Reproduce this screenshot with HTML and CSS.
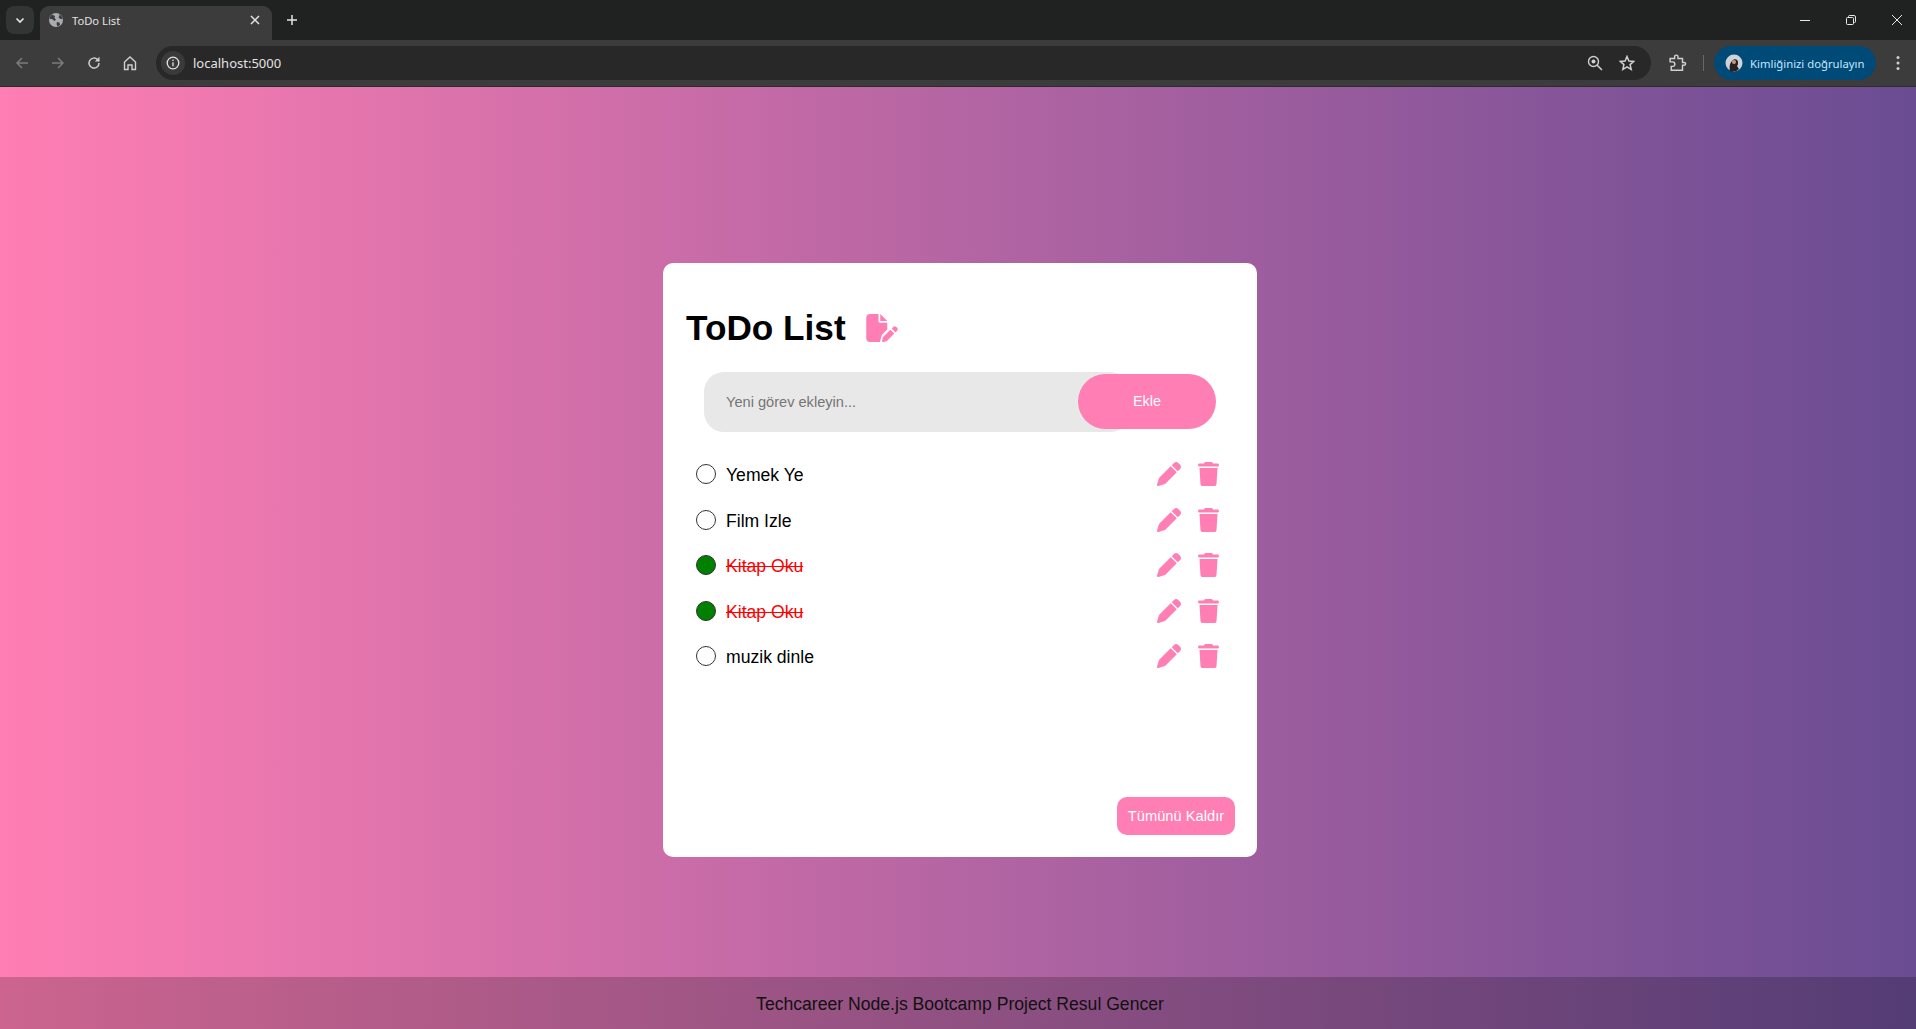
FILE: index.html
```html
<!DOCTYPE html>
<html lang="en">
<head>
    <meta charset="UTF-8">
    <meta name="viewport" content="width=device-width, initial-scale=1.0">
    <title>ToDo List</title>
    <link rel="stylesheet" href="styles.css">
</head>
<body>
    <div class="browser">
        <div class="tabstrip">
            <div class="tab-search">
                <svg width="12" height="12" viewBox="0 0 12 12"><path d="M2.5 4.5 6 8l3.5-3.5" fill="none" stroke="#e3e3e3" stroke-width="1.7"/></svg>
            </div>
            <div class="tab">
                <svg class="tab-globe" width="14" height="14" viewBox="0 0 14 14"><circle cx="7" cy="7" r="7" fill="#a9acb0"/><path d="M3 1.5 6 3 5.5 5 7 6.5 5.5 8 3 6 .6 6A7 7 0 0 1 3 1.5zM8 9l2.5.5L11 12l-2.500 1.500L7.500 11zM9.500 1l1 1.500-1 2 2 1.500 2.300-.3A7 7 0 0 0 9.500 1z" fill="#3c3c3c"/></svg>
                <span class="tab-title">ToDo List</span>
                <svg class="tab-close" width="10" height="10" viewBox="0 0 10 10"><path d="M1 1l8 8M9 1 1 9" stroke="#e3e3e3" stroke-width="1.5"/></svg>
            </div>
            <svg class="new-tab" width="12" height="12" viewBox="0 0 12 12"><path d="M6 1v10M1 6h10" stroke="#e3e3e3" stroke-width="1.5"/></svg>
            <div class="window-controls">
                <svg width="12" height="12" viewBox="0 0 12 12"><path d="M1 6.500h10" stroke="#e8e8e8"/></svg>
                <svg width="12" height="12" viewBox="0 0 12 12"><rect x="1.500" y="3.500" width="7" height="7" rx="1" fill="none" stroke="#e8e8e8"/><path d="M3.500 3.500V2.500a1 1 0 0 1 1-1h4.500a1.500 1.500 0 0 1 1.500 1.500v4.500a1 1 0 0 1-1 1h-1" fill="none" stroke="#e8e8e8"/></svg>
                <svg width="12" height="12" viewBox="0 0 12 12"><path d="M1 1l10 10M11 1 1 11" stroke="#e8e8e8"/></svg>
            </div>
        </div>
        <div class="toolbar">
            <div class="nav-icons">
                <svg width="16" height="16" viewBox="0 0 16 16"><path d="M14 8H3M8 3 3 8l5 5" fill="none" stroke="#7b7b7b" stroke-width="1.500"/></svg>
                <svg width="16" height="16" viewBox="0 0 16 16"><path d="M2 8h11M8 3l5 5-5 5" fill="none" stroke="#7b7b7b" stroke-width="1.500"/></svg>
                <svg width="16" height="16" viewBox="0 0 16 16"><path d="M13 8a5 5 0 1 1-1.500-3.500L13 6" fill="none" stroke="#d0d0d0" stroke-width="1.500"/><path d="M13.500 1.800V6.500H8.800z" fill="#d0d0d0"/></svg>
                <svg width="16" height="16" viewBox="0 0 16 16"><path d="M2.500 14.500V7L8 2l5.500 5v7.500H10V10H6v4.500z" fill="none" stroke="#d0d0d0" stroke-width="1.400"/></svg>
            </div>
            <div class="address">
                <div class="site-info">
                    <svg width="14" height="14" viewBox="0 0 14 14"><circle cx="7" cy="7" r="5.800" fill="none" stroke="#e3e3e3" stroke-width="1.300"/><path d="M7 6.200v4M7 3.600v1.400" stroke="#e3e3e3" stroke-width="1.300"/></svg>
                </div>
                <span class="url">localhost:5000</span>
                <svg class="addr-zoom" width="16" height="16" viewBox="0 0 16 16"><circle cx="6.500" cy="6.500" r="5" fill="none" stroke="#d0d0d0" stroke-width="1.400"/><circle cx="6.500" cy="6.500" r="2" fill="#d0d0d0"/><path d="M10 10l5 5" stroke="#d0d0d0" stroke-width="1.500"/></svg>
                <svg class="addr-star" width="16" height="16" viewBox="0 0 16 16"><path d="M8 1.500 9.900 6l4.800.4-3.600 3.200 1.100 4.800L8 11.800l-4.200 2.600 1.100-4.800L1.300 6.400 6.100 6z" fill="none" stroke="#d0d0d0" stroke-width="1.500"/></svg>
            </div>
            <svg class="ext-icon" width="18" height="18" viewBox="0 0 16 16"><path d="M1 4h4V2.500a1.500 1.500 0 0 1 3 0V4h4v3.500h1.500a1.200 1.200 0 0 1 0 2.500H12v4.500H2v-3.500h1.200a2 2 0 0 0 0-4H1z" fill="none" stroke="#d0d0d0" stroke-width="1.300"/></svg>
            <span class="toolbar-sep"></span>
            <div class="profile">
                <svg class="avatar" width="18" height="18" viewBox="0 0 18 18"><circle cx="9" cy="9" r="8.500" fill="#cfd3d8"/><path d="M5 17c-1-5 0-8 2-10 2-3 6-2 6 1 0 2 0 3-1 4l2 3a8.500 8.500 0 0 1-9 2z" fill="#2a2020"/><circle cx="9" cy="8" r="2" fill="#c49a86"/></svg>
                <span>Kimliğinizi doğrulayın</span>
            </div>
            <svg class="menu-dots" width="4" height="16" viewBox="0 0 4 16"><circle cx="2" cy="2.500" r="1.500" fill="#d0d0d0"/><circle cx="2" cy="8" r="1.500" fill="#d0d0d0"/><circle cx="2" cy="13.500" r="1.500" fill="#d0d0d0"/></svg>
        </div>
    </div>

    <div class="page">
        <main class="stage">
            <div class="container">
                <h1>ToDo List
                    <svg class="title-icon" viewBox="0 0 576 512"><path d="M0 64C0 28.700 28.700 0 64 0H224V128c0 17.700 14.300 32 32 32H384V285.700l-86.800 86.800c-10.300 10.300-17.500 23.100-21 37.200l-18.700 74.900c-2.300 9.200-1.800 18.800 1.300 27.500H64c-35.300 0-64-28.700-64-64V64zm384 64H256V0L384 128zM549.800 235.700l14.400 14.400c15.600 15.600 15.600 40.900 0 56.600l-29.400 29.400-71-71 29.400-29.400c15.600-15.600 40.900-15.600 56.600 0zM311.900 417L441.100 287.800l71 71L382.900 487.900c-4.100 4.100-9.200 7-14.900 8.400l-60.100 15c-5.500 1.400-11.200-.2-15.200-4.200s-5.600-9.700-4.200-15.200l15-60.100c1.400-5.600 4.300-10.800 8.400-14.900z"/></svg>
                </h1>
                <form class="add-form">
                    <input type="text" placeholder="Yeni görev ekleyin...">
                    <button type="button">Ekle</button>
                </form>
                <ul class="todo-list">
                    <li class="todo">
                        <span class="check"></span>
                        <span class="todo-text">Yemek Ye</span>
                        <svg class="icon-edit" viewBox="0 0 512 512"><path d="M362.700 19.300L314.300 67.700 444.300 197.700l48.400-48.400c25-25 25-65.500 0-90.500L453.300 19.300c-25-25-65.500-25-90.500 0zm-71 71L58.600 323.500c-10.400 10.400-18 23.300-22.200 37.400L1 481.200C-1.500 489.700 .8 498.800 7 505s15.300 8.500 23.700 6.100l120.300-35.400c14.100-4.200 27-11.800 37.400-22.200L421.700 220.300 291.700 90.300z"/></svg>
                        <svg class="icon-trash" viewBox="0 0 448 512"><path d="M135.200 17.700L128 32H32C14.300 32 0 46.300 0 64S14.300 96 32 96H416c17.700 0 32-14.300 32-32s-14.300-32-32-32H320l-7.200-14.300C307.400 6.800 296.300 0 284.200 0H163.800c-12.100 0-23.200 6.800-28.600 17.700zM416 128H32L53.200 467c1.600 25.300 22.600 45 47.900 45H346.900c25.300 0 46.300-19.700 47.900-45L416 128z"/></svg>
                    </li>
                    <li class="todo">
                        <span class="check"></span>
                        <span class="todo-text">Film Izle</span>
                        <svg class="icon-edit" viewBox="0 0 512 512"><path d="M362.700 19.300L314.300 67.700 444.300 197.700l48.400-48.400c25-25 25-65.500 0-90.500L453.300 19.300c-25-25-65.500-25-90.500 0zm-71 71L58.600 323.500c-10.400 10.400-18 23.300-22.200 37.400L1 481.200C-1.500 489.700 .8 498.800 7 505s15.300 8.500 23.700 6.100l120.300-35.400c14.100-4.200 27-11.800 37.400-22.200L421.700 220.300 291.700 90.300z"/></svg>
                        <svg class="icon-trash" viewBox="0 0 448 512"><path d="M135.200 17.700L128 32H32C14.300 32 0 46.300 0 64S14.300 96 32 96H416c17.700 0 32-14.300 32-32s-14.300-32-32-32H320l-7.200-14.300C307.400 6.800 296.300 0 284.200 0H163.800c-12.100 0-23.200 6.800-28.600 17.700zM416 128H32L53.200 467c1.600 25.300 22.600 45 47.900 45H346.900c25.300 0 46.300-19.700 47.900-45L416 128z"/></svg>
                    </li>
                    <li class="todo done">
                        <span class="check"></span>
                        <span class="todo-text">Kitap Oku</span>
                        <svg class="icon-edit" viewBox="0 0 512 512"><path d="M362.700 19.300L314.300 67.700 444.300 197.700l48.400-48.400c25-25 25-65.500 0-90.500L453.300 19.300c-25-25-65.500-25-90.500 0zm-71 71L58.600 323.500c-10.400 10.400-18 23.300-22.200 37.400L1 481.200C-1.500 489.700 .8 498.800 7 505s15.300 8.500 23.700 6.100l120.300-35.400c14.100-4.200 27-11.800 37.400-22.200L421.700 220.300 291.700 90.300z"/></svg>
                        <svg class="icon-trash" viewBox="0 0 448 512"><path d="M135.200 17.700L128 32H32C14.300 32 0 46.300 0 64S14.300 96 32 96H416c17.700 0 32-14.300 32-32s-14.300-32-32-32H320l-7.200-14.300C307.400 6.800 296.300 0 284.200 0H163.800c-12.100 0-23.200 6.800-28.600 17.700zM416 128H32L53.200 467c1.600 25.300 22.600 45 47.900 45H346.900c25.300 0 46.300-19.700 47.900-45L416 128z"/></svg>
                    </li>
                    <li class="todo done">
                        <span class="check"></span>
                        <span class="todo-text">Kitap Oku</span>
                        <svg class="icon-edit" viewBox="0 0 512 512"><path d="M362.700 19.300L314.300 67.700 444.300 197.700l48.400-48.400c25-25 25-65.500 0-90.500L453.300 19.300c-25-25-65.500-25-90.500 0zm-71 71L58.600 323.500c-10.400 10.400-18 23.300-22.200 37.400L1 481.200C-1.500 489.700 .8 498.800 7 505s15.300 8.500 23.700 6.100l120.300-35.400c14.100-4.200 27-11.800 37.400-22.200L421.700 220.300 291.700 90.300z"/></svg>
                        <svg class="icon-trash" viewBox="0 0 448 512"><path d="M135.200 17.700L128 32H32C14.300 32 0 46.300 0 64S14.300 96 32 96H416c17.700 0 32-14.300 32-32s-14.300-32-32-32H320l-7.200-14.300C307.400 6.800 296.300 0 284.200 0H163.800c-12.100 0-23.200 6.800-28.600 17.700zM416 128H32L53.200 467c1.600 25.300 22.600 45 47.900 45H346.900c25.300 0 46.300-19.700 47.900-45L416 128z"/></svg>
                    </li>
                    <li class="todo">
                        <span class="check"></span>
                        <span class="todo-text">muzik dinle</span>
                        <svg class="icon-edit" viewBox="0 0 512 512"><path d="M362.700 19.300L314.300 67.700 444.300 197.700l48.400-48.400c25-25 25-65.500 0-90.500L453.300 19.300c-25-25-65.500-25-90.500 0zm-71 71L58.600 323.500c-10.400 10.400-18 23.300-22.200 37.400L1 481.200C-1.500 489.700 .8 498.800 7 505s15.300 8.500 23.700 6.100l120.300-35.400c14.100-4.200 27-11.800 37.400-22.200L421.700 220.300 291.700 90.300z"/></svg>
                        <svg class="icon-trash" viewBox="0 0 448 512"><path d="M135.200 17.700L128 32H32C14.300 32 0 46.300 0 64S14.300 96 32 96H416c17.700 0 32-14.300 32-32s-14.300-32-32-32H320l-7.200-14.300C307.400 6.800 296.300 0 284.200 0H163.800c-12.100 0-23.200 6.800-28.600 17.700zM416 128H32L53.200 467c1.600 25.300 22.600 45 47.900 45H346.900c25.300 0 46.300-19.700 47.900-45L416 128z"/></svg>
                    </li>
                </ul>
                <div class="actions">
                    <button class="clear-all" type="button">Tümünü Kaldır</button>
                </div>
            </div>
        </main>
        <footer class="footer">Techcareer Node.js Bootcamp Project Resul Gencer</footer>
    </div>
</body>
</html>
```

FILE: styles.css
```css
* {
    box-sizing: border-box;
}

body {
    font-family: "Liberation Sans", Arial, sans-serif;
    margin: 0;
    height: 100vh;
    display: flex;
    flex-direction: column;
    overflow: hidden;
}

/* browser frame */
.browser {
    font-family: "Noto Sans", sans-serif;
    flex: none;
    height: 87px;
    background: #202222;
    border-bottom: 1px solid #2c2c2c;
}

.tabstrip {
    height: 40px;
    padding: 6px 0 0 6px;
    display: flex;
    align-items: flex-start;
}

.tab-search {
    width: 28px;
    height: 28px;
    border-radius: 8px;
    background: #333535;
    display: flex;
    align-items: center;
    justify-content: center;
}

.tab {
    width: 232px;
    height: 34px;
    margin-left: 6px;
    padding: 0 12px 6px 9px;
    background: #3c3c3c;
    border-radius: 9px 9px 0 0;
    display: flex;
    align-items: center;
}

.tab-globe {
    flex: none;
}

.tab-title {
    flex: 1;
    margin-left: 9px;
    font-size: 11.2px;
    color: #e3e3e3;
}

.new-tab {
    margin: 8px 0 0 14px;
}

.window-controls {
    margin-left: auto;
    padding: 8px 13px 0 0;
    display: flex;
    gap: 34px;
}

.toolbar {
    height: 46px;
    padding: 6px 0 6px 14px;
    background: #3c3c3c;
    display: flex;
    align-items: center;
}

.nav-icons {
    width: 142px;
    display: flex;
    gap: 20px;
}

.address {
    width: 1495px;
    height: 34px;
    padding: 0 16px 0 5px;
    border-radius: 17px;
    background: #282828;
    display: flex;
    align-items: center;
}

.site-info {
    width: 24px;
    height: 24px;
    border-radius: 50%;
    background: #3a3a3a;
    display: flex;
    align-items: center;
    justify-content: center;
}

.url {
    flex: 1;
    margin-left: 8px;
    font-size: 13px;
    color: #e3e3e3;
}

.addr-star {
    margin-left: 16px;
}

.ext-icon {
    margin-left: 18px;
}

.toolbar-sep {
    width: 1px;
    height: 16px;
    margin: 0 10px 0 16px;
    background: #666;
}

.profile {
    width: 162px;
    height: 34px;
    padding-left: 11px;
    border-radius: 17px;
    background: #004a77;
    color: #c2e7ff;
    font-size: 11.3px;
    display: flex;
    align-items: center;
    gap: 7px;
}

.menu-dots {
    margin-left: 20px;
}

/* page */
.page {
    flex: 1;
    display: flex;
    flex-direction: column;
    background: linear-gradient(90deg, #ff7eb3, #6a4c93);
}

.stage {
    flex: 1;
    display: flex;
    justify-content: center;
    align-items: center;
    padding: 56px 0 0 4px;
}

.container {
    background: #fff;
    border-radius: 10px;
    width: 594px;
    height: 594px;
    padding: 41px 22px 22px 23px;
    display: flex;
    flex-direction: column;
}

h1 {
    margin: 0 0 20px;
    font-size: 35.2px;
    line-height: 48px;
    color: #000;
    display: flex;
    align-items: center;
}

.title-icon {
    width: 32px;
    height: 28px;
    margin-left: 20px;
    fill: #ff7eb3;
}

.add-form {
    width: 512px;
    margin: 0 0 21px 18px;
    display: flex;
    align-items: center;
}

.add-form input {
    width: 426px;
    height: 60px;
    padding: 0 22px;
    border: none;
    border-radius: 20px;
    outline: none;
    background: #e8e8e8;
    font-family: inherit;
    font-size: 14.6px;
}

.add-form input::placeholder {
    color: #757575;
}

.add-form button {
    width: 138px;
    height: 55px;
    margin: -2px 0 0 -52px;
    border: none;
    border-radius: 28px;
    background: #ff7eb3;
    color: #fff;
    font-family: inherit;
    font-size: 14.4px;
}

.todo-list {
    flex: 1;
    list-style: none;
    margin: 0;
    padding: 0;
}

.todo {
    height: 45.5px;
    padding-right: 16px;
    display: flex;
    align-items: center;
    font-size: 17.6px;
    color: #000;
}

.check {
    flex: none;
    width: 20px;
    height: 20px;
    margin: -3px 10px 0 10px;
    border: 1px solid #333;
    border-radius: 50%;
}

.todo-text {
    flex: 1;
}

.icon-edit {
    width: 24px;
    height: 24px;
    margin-bottom: 3px;
    fill: #ff7eb3;
}

.icon-trash {
    width: 21px;
    height: 24px;
    margin: 0 0 3px 17px;
    fill: #ff7eb3;
}

.done .check {
    background: #008000;
}

.done .todo-text {
    color: #f00;
    text-decoration: line-through;
}

.actions {
    display: flex;
    justify-content: flex-end;
}

.clear-all {
    width: 118px;
    height: 38px;
    border: none;
    border-radius: 10px;
    background: #ff7eb3;
    color: #fff;
    font-family: inherit;
    font-size: 14.7px;
}

.footer {
    flex: none;
    height: 52px;
    padding: 2px 0 0 4px;
    background: rgba(0, 0, 0, 0.2);
    color: #111;
    font-size: 17.6px;
    display: flex;
    align-items: center;
    justify-content: center;
}
```
